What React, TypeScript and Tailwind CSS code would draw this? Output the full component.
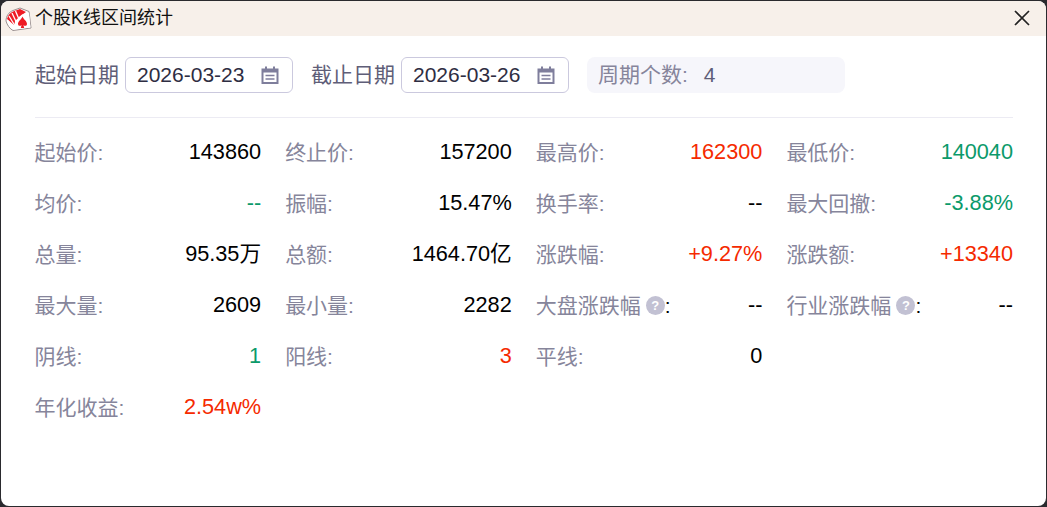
const CJK = '"Liberation Sans","Noto Sans CJK SC",sans-serif';

type Item = { label: string; value: string; color?: string; help?: boolean };

const RED = "text-[#f52a00]";
const GREEN = "text-[#0b9a6a]";

const items: (Item | null)[] = [
  { label: "起始价:", value: "143860" },
  { label: "终止价:", value: "157200" },
  { label: "最高价:", value: "162300", color: RED },
  { label: "最低价:", value: "140040", color: GREEN },
  { label: "均价:", value: "--", color: GREEN },
  { label: "振幅:", value: "15.47%" },
  { label: "换手率:", value: "--" },
  { label: "最大回撤:", value: "-3.88%", color: GREEN },
  { label: "总量:", value: "95.35万" },
  { label: "总额:", value: "1464.70亿" },
  { label: "涨跌幅:", value: "+9.27%", color: RED },
  { label: "涨跌额:", value: "+13340", color: RED },
  { label: "最大量:", value: "2609" },
  { label: "最小量:", value: "2282" },
  { label: "大盘涨跌幅", value: "--", help: true },
  { label: "行业涨跌幅", value: "--", help: true },
  { label: "阴线:", value: "1", color: GREEN },
  { label: "阳线:", value: "3", color: RED },
  { label: "平线:", value: "0" },
  null,
  { label: "年化收益:", value: "2.54w%", color: RED },
];

function Logo() {
  return (
    <svg width="28" height="26" viewBox="0 0 28 26" className="shrink-0">
      <path d="M2 15 C2 10 5 6 9 4.5 L16 2 L25 5.5 L27 22 L9 24.5 C6 23 3 19 2 15 Z" fill="#fff" stroke="#9a8f8f" strokeWidth="1" />
      <path d="M3 13 C4 9 6 7 9 5.5 L16 3 L22 6 L15 11 L10 19 Z" fill="#ee1c25" />
      <g fill="none" stroke="#fff" strokeWidth="1.3">
        <path d="M5 10 L10.5 19" />
        <path d="M8 7 L12 15.5" />
        <path d="M11.5 5 L14.5 12" />
        <path d="M3.5 14.5 L9.5 21" />
      </g>
      <path d="M11 15 L18 8.5 L25 7 L26.5 21.5 L10 23.5 Z" fill="#fff" />
      <path d="M18.5 10.5 C19.5 13.5 23 15 23 18 C23 20 20.5 20.5 19.4 19 L20.2 22 L16.8 22 L17.6 19 C16.5 20.5 14 20 14 18 C14 15 17.5 13.5 18.5 10.5 Z" fill="#ee1c25" />
    </svg>
  );
}

function CalendarIcon() {
  return (
    <svg width="18" height="18" viewBox="0 0 18 18" className="shrink-0">
      <path d="M1.5 3.5h15v13.5h-15z" fill="none" stroke="#7f7e9c" strokeWidth="2" />
      <path d="M1.5 3h15v3.5h-15z" fill="#7f7e9c" />
      <path d="M5 .5v3M13 .5v3" stroke="#7f7e9c" strokeWidth="2" />
      <path d="M4.5 9.5h9M4.5 13h9" stroke="#7f7e9c" strokeWidth="1.6" />
    </svg>
  );
}

function DateBox({ value }: { value: string }) {
  return (
    <div className="flex h-[36px] w-[168px] items-center justify-between rounded-[6px] border border-[#cbc9de] bg-white pl-[11px] pr-[13px] text-[21px] text-[#2e2d42]">
      <span>{value}</span>
      <CalendarIcon />
    </div>
  );
}

function Help() {
  return (
    <span className="ml-[5px] flex h-[19px] w-[19px] items-center justify-center rounded-full bg-[#c2c1d3] text-[13px] font-bold leading-none text-white">
      ?
    </span>
  );
}

export default function App() {
  return (
    <div className="h-[507px] w-[1047px] overflow-hidden bg-[#2a2a2e]" style={{ fontFamily: CJK }}>
      <div className="ml-px mt-px flex h-[505px] w-[1045px] flex-col overflow-hidden rounded-[8px] bg-white">
        <div className="flex h-[35px] shrink-0 items-center justify-between bg-[#f7f0ea] pl-[3px] pr-[15px]">
          <div className="flex items-center gap-[3px] text-[18px] text-[#111]">
            <Logo />
            <span>个股K线区间统计</span>
          </div>
          <svg width="18" height="18" viewBox="0 0 18 18" className="-mt-[2px]">
            <path d="M2 2l14 14M16 2L2 16" stroke="#222" strokeWidth="1.7" />
          </svg>
        </div>

        <div className="flex flex-col pl-[34px] pr-[33px] pt-[21px]">
          <div className="flex h-[36px] items-center text-[21px] text-[#5f5e78]">
            <span className="mr-[6px]">起始日期</span>
            <DateBox value="2026-03-23" />
            <span className="ml-[18px] mr-[6px]">截止日期</span>
            <DateBox value="2026-03-26" />
            <div className="ml-[18px] flex h-[36px] w-[258px] items-center rounded-[8px] bg-[#f6f6fb] pl-[11px] text-[#86859b]">
              <span>周期个数:</span>
              <span className="ml-[16px] text-[#5f5e78]">4</span>
            </div>
          </div>

          <div className="mt-[24px] h-px bg-[#ecebf3]" />

          <div className="-ml-[0.5px] mt-[9px] grid grid-cols-4 gap-x-[24px]">
            {items.map((it, i) =>
              it ? (
                <div key={i} className="flex h-[51px] items-center justify-between text-[21px]">
                  <span className="flex items-center text-[#86859b]">
                    {it.label}
                    {it.help && <Help />}
                    {it.help && <span className="text-black">:</span>}
                  </span>
                  <span className={`text-[21.7px] ${it.color ?? "text-black"}`}>{it.value}</span>
                </div>
              ) : (
                <div key={i} />
              ),
            )}
          </div>
        </div>
      </div>
    </div>
  );
}
